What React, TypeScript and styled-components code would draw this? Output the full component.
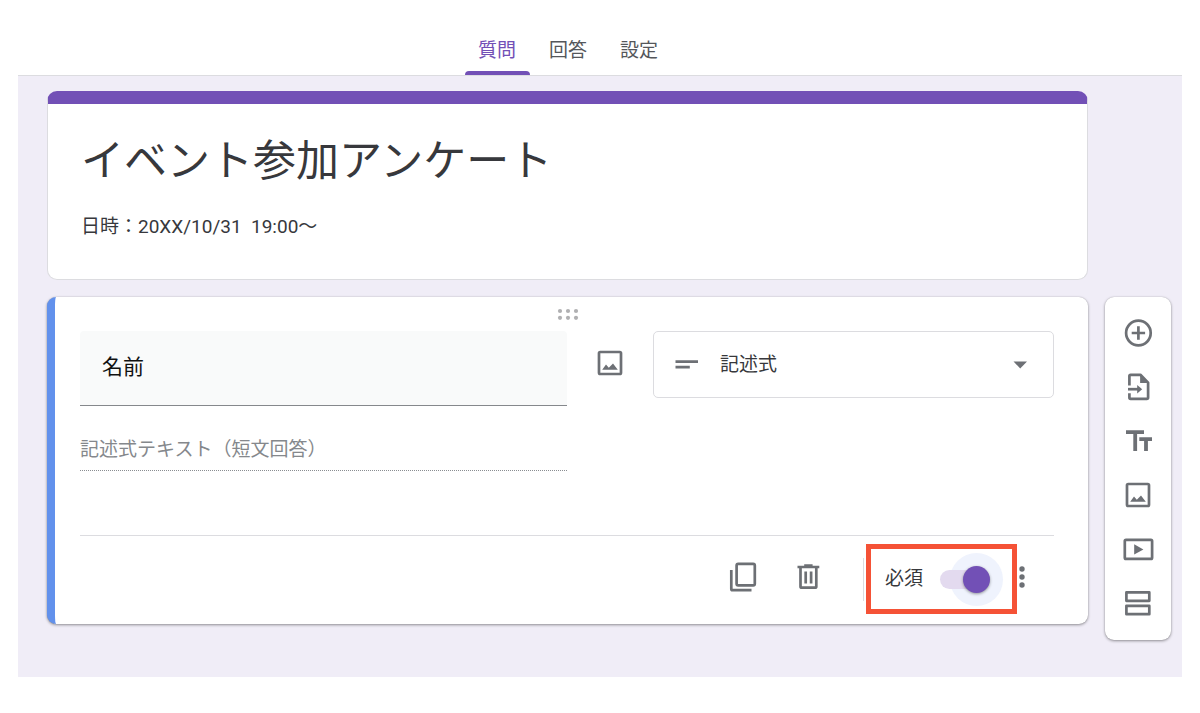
import React from 'react';
import styled, { createGlobalStyle } from 'styled-components';

const colors = {
  purple: '#7250b6',
  lavender: '#f0edf7',
  blue: '#6291ec',
  ink: '#37383c',
  icon: '#6d7075',
  line: '#dcdce0',
  highlight: '#f55236',
};

const GlobalStyle = createGlobalStyle`
  *, *::before, *::after { box-sizing: border-box; }
  body {
    margin: 0;
    background: #fff;
    color: ${colors.ink};
    font-family: Roboto, 'Noto Sans CJK JP', sans-serif;
    font-size: 19px;
    line-height: 28px;
  }
  button, input, select { font: inherit; color: inherit; }
`;

const Page = styled.div`
  padding: 0 18px 36px;
`;

const Tabs = styled.nav`
  display: flex;
  justify-content: center;
  gap: 6px;
  padding: 24px 94px 0 30px;
  border-bottom: 1px solid ${colors.line};
`;

const Tab = styled.button<{ $active?: boolean }>`
  display: flex;
  flex-direction: column;
  align-items: center;
  justify-content: space-between;
  width: 65px;
  height: 51px;
  padding: 13px 0 0;
  border: 0;
  background: none;
  color: ${(p) => (p.$active ? colors.purple : '#55575b')};
  cursor: pointer;

  &::after {
    content: '';
    width: 100%;
    height: 4px;
    border-radius: 4px 4px 0 0;
    background: ${(p) => (p.$active ? colors.purple : 'transparent')};
  }
`;

const Canvas = styled.main`
  display: grid;
  grid-template-columns: minmax(0, 1fr) 66px;
  align-items: start;
  gap: 17px;
  padding: 15px 11px 37px 29px;
  background: ${colors.lavender};
`;

const HeaderCard = styled.header`
  grid-column: 1;
  padding: 30px 33px 38px;
  border: 1px solid ${colors.line};
  border-top: 13px solid ${colors.purple};
  border-radius: 10px;
  background: #fff;
`;

const Title = styled.h1`
  margin: 0;
  font-size: 43px;
  font-weight: 400;
  line-height: 54px;
`;

const Description = styled.p`
  margin: 25px 0 0;
  white-space: pre-wrap;
`;

const QuestionCard = styled.section`
  grid-column: 1;
  padding: 0 34px 10px 25px;
  border-left: 8px solid ${colors.blue};
  border-radius: 9px;
  background: #fff;
  box-shadow: 0 1px 3px rgba(0, 0, 0, 0.4), 0 0 1px rgba(0, 0, 0, 0.2);
`;

const DragHandle = styled.div`
  display: flex;
  justify-content: center;
  height: 34px;
  padding: 11px 0 0 2px;
`;

const QuestionRow = styled.div`
  display: grid;
  grid-template-columns: minmax(0, 487fr) 86px minmax(0, 401fr);
  align-items: start;
`;

const QuestionInput = styled.input`
  width: 100%;
  height: 75px;
  padding: 0 22px 6px;
  border: 0;
  border-bottom: 1px solid #85888c;
  border-radius: 4px 4px 0 0;
  background: #f9fafa;
  color: #111;
  font-size: 21px;
  outline: none;
`;

const IconButton = styled.button`
  display: flex;
  align-items: center;
  justify-content: center;
  width: 100%;
  height: 64px;
  padding: 0;
  border: 0;
  background: none;
  color: ${colors.icon};
  cursor: pointer;
`;

const SelectField = styled.label`
  display: flex;
  align-items: center;
  height: 67px;
  padding: 0 25px 0 16px;
  border: 1px solid ${colors.line};
  border-radius: 5px;
  color: ${colors.icon};
`;

const TypeSelect = styled.select`
  flex: 1;
  min-width: 0;
  padding: 0 0 0 16px;
  border: 0;
  background: none;
  color: ${colors.ink};
  appearance: none;
  outline: none;
`;

const AnswerRow = styled.div`
  display: grid;
  grid-template-columns: minmax(0, 487fr) minmax(0, 487fr);
  padding: 28px 0 64px;
`;

const AnswerInput = styled.input`
  width: 100%;
  height: 37px;
  padding: 0 0 5px;
  border: 0;
  border-bottom: 1px dotted #8a8d91;
  background: none;

  &::placeholder {
    color: #85888c;
    opacity: 1;
  }
`;

const Footer = styled.footer`
  display: flex;
  align-items: center;
  justify-content: flex-end;
  padding-top: 8px;
  border-top: 1px solid ${colors.line};
`;

const FooterButton = styled(IconButton)`
  width: 65px;
  padding-bottom: 5px;
`;

const MoreButton = styled(FooterButton)`
  width: 10px;
  margin: 0 27px 0 0;
`;

const Divider = styled.span`
  width: 1px;
  height: 43px;
  margin: 0 2px 0 23px;
  background: ${colors.line};
`;

const Required = styled.label`
  display: flex;
  align-items: center;
  justify-content: space-between;
  width: 151px;
  height: 70px;
  padding: 0 22px 0 14px;
  border: 5px solid ${colors.highlight};
  isolation: isolate;
`;

const Switch = styled.input`
  position: relative;
  width: 50px;
  height: 19px;
  margin: 0;
  border-radius: 10px;
  background: #e3daef;
  appearance: none;
  cursor: pointer;

  &::before {
    content: '';
    position: absolute;
    z-index: -1;
    top: -17px;
    right: -13px;
    width: 53px;
    height: 53px;
    border-radius: 50%;
    background: #eff3fd;
  }

  &::after {
    content: '';
    position: absolute;
    top: -4px;
    right: 0;
    width: 27px;
    height: 27px;
    border-radius: 50%;
    background: ${colors.purple};
    box-shadow: 0 1px 3px rgba(0, 0, 0, 0.4);
  }

  &:not(:checked)::after {
    right: 23px;
    background: #fff;
  }
`;

const Toolbar = styled.aside`
  grid-column: 2;
  padding: 9px 0 10px;
  border-radius: 9px;
  background: #fff;
  box-shadow: 0 1px 3px rgba(0, 0, 0, 0.4), 0 0 1px rgba(0, 0, 0, 0.2);
`;

const ToolButton = styled(IconButton)`
  height: 54px;
`;

const Icon = ({ children }: { children: React.ReactNode }) => (
  <svg width="34" height="34" viewBox="0 0 34 34" fill="none" stroke="currentColor" strokeWidth="2.7" strokeLinejoin="round" aria-hidden="true">
    {children}
  </svg>
);

const ImageIcon = () => (
  <Icon>
    <rect x="6" y="6" width="22" height="22" rx="1.2" />
    <path d="M9.2 23.8 13 18.6 15.8 21.8 20 17.6 24.8 23.8Z" fill="currentColor" stroke="none" />
  </Icon>
);

const ShortTextIcon = () => (
  <Icon>
    <path d="M5.5 13.6H28M5.5 19.2H19.8" />
  </Icon>
);

const CopyIcon = () => (
  <Icon>
    <rect x="10.6" y="3.8" width="18.2" height="21.6" rx="1.6" />
    <path d="M5.3 10V29Q5.3 30.2 6.5 30.2H25.5" />
  </Icon>
);

const TrashIcon = () => (
  <Icon>
    <path d="M6.5 7H28.3M13.2 5.6H21.6" />
    <path d="M9.5 7V26.4Q9.5 27.7 10.8 27.7H24Q25.3 27.7 25.3 26.4V7" />
    <path d="M14.7 11.4V23.4M20.1 11.4V23.4" />
  </Icon>
);

const AddIcon = () => (
  <Icon>
    <circle cx="17.4" cy="17" r="12.3" />
    <path d="M17.4 10.3V23.7M10.7 17H24.1" />
  </Icon>
);

const ImportIcon = () => (
  <Icon>
    <path d="M8.4 15.5V6Q8.4 4.8 9.6 4.8H19.4L27.1 12.6V27.5Q27.1 28.8 25.8 28.8H9.6Q8.4 28.8 8.4 27.5V23.2" />
    <path d="M19.1 4.4V12.9H27.8Z" fill="currentColor" stroke="none" />
    <path d="M7 19.2H17.4" />
    <path d="M16.2 15V23.4L21.2 19.2Z" fill="currentColor" stroke="none" />
  </Icon>
);

const TextIcon = () => (
  <Icon>
    <path d="M5 6.3H23V10H16.1V27H12.3V10H5ZM18.3 13.3H31V17H26.9V27H23.1V17H18.3Z" fill="currentColor" stroke="none" />
  </Icon>
);

const VideoIcon = () => (
  <Icon>
    <rect x="3.8" y="7.9" width="27.3" height="19" rx="1.2" />
    <path d="M13.2 12.2V22.6L22.4 17.4Z" fill="currentColor" stroke="none" />
  </Icon>
);

const SectionIcon = () => (
  <Icon>
    <path d="M5.4 6.4H28.3V14.8H5.4ZM5.4 19.8H28.3V28.2H5.4Z" />
  </Icon>
);

const tools = [
  { label: '質問を追加', Glyph: AddIcon },
  { label: '質問をインポート', Glyph: ImportIcon },
  { label: 'タイトルと説明を追加', Glyph: TextIcon },
  { label: '画像を追加', Glyph: ImageIcon },
  { label: '動画を追加', Glyph: VideoIcon },
  { label: 'セクションを追加', Glyph: SectionIcon },
];

export default function App() {
  return (
    <>
      <GlobalStyle />
      <Page>
        <Tabs>
          <Tab type="button" $active>質問</Tab>
          <Tab type="button">回答</Tab>
          <Tab type="button">設定</Tab>
        </Tabs>
        <Canvas>
          <HeaderCard>
            <Title>イベント参加アンケート</Title>
            <Description>{'日時：20XX/10/31  19:00〜'}</Description>
          </HeaderCard>
          <QuestionCard>
            <DragHandle>
              <svg width="22" height="13" viewBox="0 0 22 13" fill="#b0b0b2" aria-hidden="true">
                {[3, 11, 19].map((x) => (
                  <React.Fragment key={x}>
                    <circle cx={x} cy="3" r="2.1" />
                    <circle cx={x} cy="9.8" r="2.1" />
                  </React.Fragment>
                ))}
              </svg>
            </DragHandle>
            <QuestionRow>
              <QuestionInput type="text" defaultValue="名前" aria-label="質問" />
              <IconButton type="button" aria-label="画像を追加"><ImageIcon /></IconButton>
              <SelectField>
                <ShortTextIcon />
                <TypeSelect aria-label="質問の種類">
                  <option>記述式</option>
                </TypeSelect>
                <svg width="16" height="8" viewBox="0 0 16 8" fill="currentColor" aria-hidden="true">
                  <path d="M1.5 0.5H15L8.2 7.5Z" />
                </svg>
              </SelectField>
            </QuestionRow>
            <AnswerRow>
              <AnswerInput type="text" placeholder="記述式テキスト（短文回答）" aria-label="回答" disabled />
            </AnswerRow>
            <Footer>
              <FooterButton type="button" aria-label="コピーを作成"><CopyIcon /></FooterButton>
              <FooterButton type="button" aria-label="削除"><TrashIcon /></FooterButton>
              <Divider />
              <Required>
                必須
                <Switch type="checkbox" role="switch" defaultChecked />
              </Required>
              <MoreButton type="button" aria-label="その他">
                <svg width="6" height="24" viewBox="0 0 6 24" fill="currentColor" aria-hidden="true">
                  <circle cx="3" cy="4" r="2.7" />
                  <circle cx="3" cy="12" r="2.7" />
                  <circle cx="3" cy="20" r="2.7" />
                </svg>
              </MoreButton>
            </Footer>
          </QuestionCard>
          <Toolbar>
            {tools.map(({ label, Glyph }) => (
              <ToolButton key={label} type="button" aria-label={label}><Glyph /></ToolButton>
            ))}
          </Toolbar>
        </Canvas>
      </Page>
    </>
  );
}
